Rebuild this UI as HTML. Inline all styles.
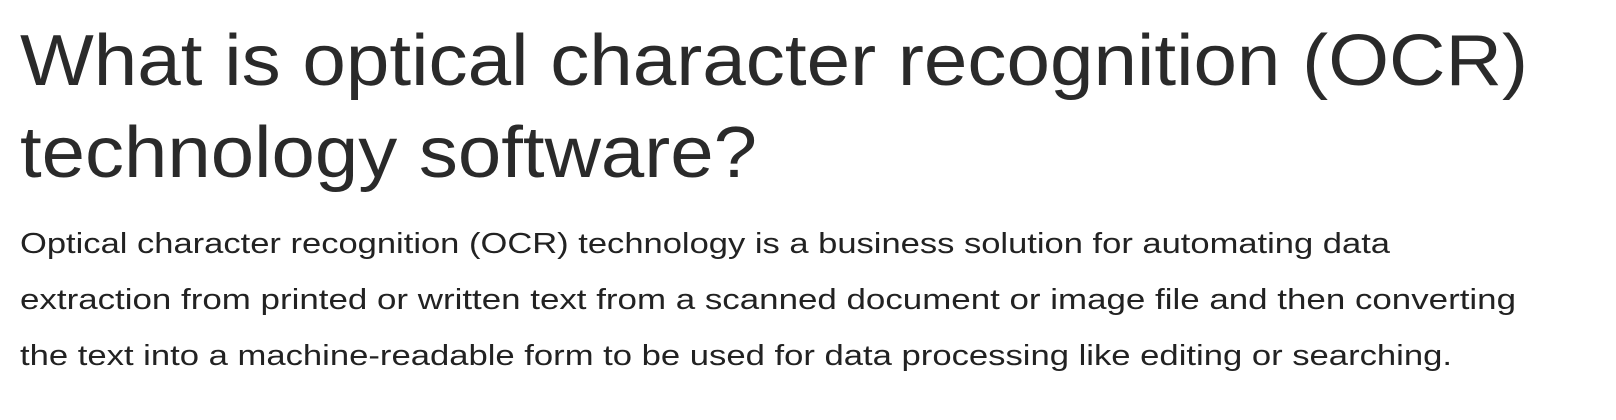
<!DOCTYPE html>
<html><head><meta charset="utf-8"><style>
html,body{margin:0;padding:0;background:#fff;width:1616px;height:420px;overflow:hidden}
svg{display:block}
.h{font-family:"Liberation Sans",sans-serif;font-size:72px;fill:#2a2a2a}
.b{font-family:"Liberation Sans",sans-serif;font-size:29px;fill:#222}
</style></head><body>
<svg width="1616" height="420" xmlns="http://www.w3.org/2000/svg">
<text class="h" x="20" y="85" textLength="1508" lengthAdjust="spacingAndGlyphs">What is optical character recognition (OCR)</text>
<text class="h" x="20" y="177" textLength="737" lengthAdjust="spacingAndGlyphs">technology software?</text>
<text class="b" x="20" y="253" textLength="1370" lengthAdjust="spacingAndGlyphs">Optical character recognition (OCR) technology is a business solution for automating data</text>
<text class="b" x="20" y="309" textLength="1496" lengthAdjust="spacingAndGlyphs">extraction from printed or written text from a scanned document or image file and then converting</text>
<text class="b" x="20" y="365" textLength="1432" lengthAdjust="spacingAndGlyphs">the text into a machine-readable form to be used for data processing like editing or searching.</text>
</svg>
</body></html>
